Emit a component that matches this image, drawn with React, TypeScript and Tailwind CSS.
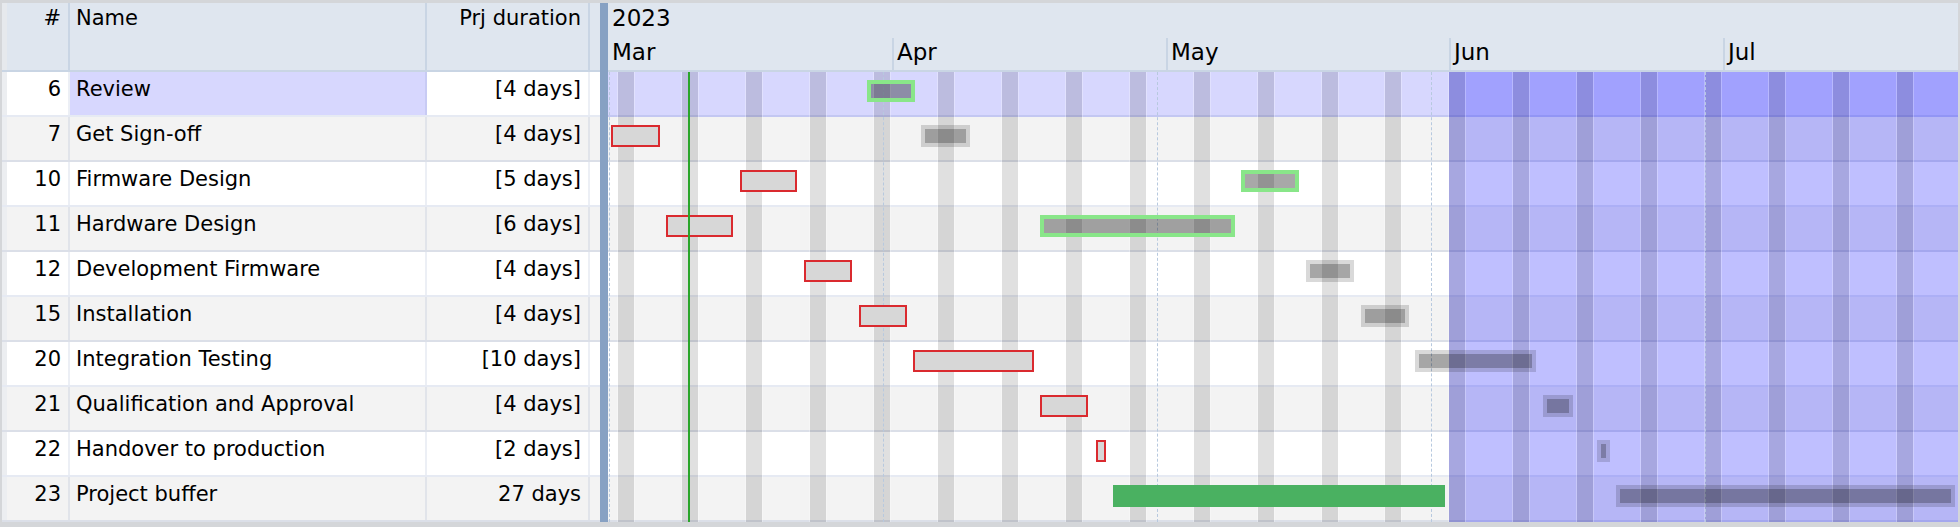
import React from "react";

type Row = {
  id: number;
  name: string;
  dur: string;
  selected?: boolean;
  red?: [number, number];
  solid?: [number, number];
  plan?: [number, number, "green" | "gray"];
};

const rows: Row[] = [
  { id: 6, name: "Review", dur: "[4 days]", selected: true, plan: [259, 48, "green"] },
  { id: 7, name: "Get Sign-off", dur: "[4 days]", red: [3, 49], plan: [313, 49, "gray"] },
  { id: 10, name: "Firmware Design", dur: "[5 days]", red: [131.5, 57.5], plan: [633, 58, "green"] },
  { id: 11, name: "Hardware Design", dur: "[6 days]", red: [58, 66.5], plan: [432, 195, "green"] },
  { id: 12, name: "Development Firmware", dur: "[4 days]", red: [196, 48], plan: [698, 48, "gray"] },
  { id: 15, name: "Installation", dur: "[4 days]", red: [251, 48], plan: [753, 48, "gray"] },
  { id: 20, name: "Integration Testing", dur: "[10 days]", red: [304.5, 121.5], plan: [807, 121, "gray"] },
  { id: 21, name: "Qualification and Approval", dur: "[4 days]", red: [432.3, 48.2], plan: [935, 30, "gray"] },
  { id: 22, name: "Handover to production", dur: "[2 days]", red: [487.6, 10.7], plan: [989, 13, "gray"] },
  { id: 23, name: "Project buffer", dur: "27 days", solid: [505, 332], plan: [1008, 338.6, "gray"] },
];

const stripes = Array.from({ length: 21 }, (_, k) => 9.3 + k * 63.93);
const dashes = [0.5, 274.5, 548.5, 822.5, 1096.5];

function rowBg(i: number, r: Row) {
  if (r.selected) return "bg-white";
  return i % 2 === 1 ? "bg-[#f3f3f3]" : "bg-white";
}

export default function App() {
  return (
    <div className="w-[1960px] h-[527px] bg-[#d4d6d9] pt-[3px] pl-[2px] pr-[2px] pb-[5px] flex font-['DejaVu_Sans',sans-serif] text-black overflow-hidden">
      {/* Left grid */}
      <div className="w-[598px] flex flex-col">
        <div className="h-[69px] flex bg-[#dfe6ef] border-b-2 border-[#c9d5e4] text-[21px] leading-[24px]">
          <div className="w-[5px] bg-[#e6e9ed]" />
          <div className="w-[63px] border-r-2 border-[#c9d5e4] text-right pr-[7px] pt-[3px]">#</div>
          <div className="w-[357px] border-r-2 border-[#c9d5e4] pl-[6px] pt-[3px]">Name</div>
          <div className="w-[163px] border-r-2 border-[#c9d5e4] text-right pr-[7px] pt-[3px]">Prj duration</div>
          <div className="w-[10px]" />
        </div>
        {rows.map((r, i) => (
          <div
            key={r.id}
            className={`h-[45px] flex border-b-2 border-[rgba(64,96,160,0.13)] text-[21px] leading-[24px] ${rowBg(i, r)}`}
          >
            <div className="w-[5px] bg-[#eceef1]" />
            <div className="w-[63px] border-r-2 border-[rgba(64,96,160,0.1)] text-right pr-[7px] pt-[5px]">{r.id}</div>
            <div
              className={`w-[357px] border-r-2 border-[rgba(64,96,160,0.1)] pl-[6px] pt-[5px] whitespace-nowrap ${
                r.selected ? "bg-[#d7d7fe]" : ""
              }`}
            >
              {r.name}
            </div>
            <div className="w-[163px] border-r-2 border-[rgba(64,96,160,0.1)] text-right pr-[7px] pt-[5px] whitespace-nowrap">
              {r.dur}
            </div>
            <div className="w-[10px]" />
          </div>
        ))}
      </div>

      {/* Splitter */}
      <div className="w-[8px] bg-[#87a1c3]" />

      {/* Chart */}
      <div className="w-[1350px] flex flex-col">
        <div className="h-[69px] bg-[#dfe6ef] border-b-2 border-[#c9d5e4] flex flex-col text-[23px] leading-[26px]">
          <div className="h-[35px] pl-[4px] pt-[2px]">2023</div>
          <div className="h-[32px] flex">
            <div className="w-[284px] pl-[4px] pt-[1px]">Mar</div>
            <div className="w-[274px] border-l-2 border-[#c9d5e4] pl-[3px] pt-[1px]">Apr</div>
            <div className="w-[283px] border-l-2 border-[#c9d5e4] pl-[3px] pt-[1px]">May</div>
            <div className="w-[274px] border-l-2 border-[#c9d5e4] pl-[3px] pt-[1px]">Jun</div>
            <div className="flex-1 border-l-2 border-[#c9d5e4] pl-[3px] pt-[1px]">Jul</div>
          </div>
        </div>
        <div className="relative flex-1">
          {rows.map((r, i) => (
            <div
              key={r.id}
              className={`h-[45px] border-b-2 border-[rgba(64,96,160,0.13)] ${
                r.selected ? "bg-[#d7d7fe]" : rowBg(i, r)
              }`}
            />
          ))}
          {/* non-working area */}
          <div className="absolute top-0 bottom-0 left-[840.5px] right-0 bg-[rgba(0,0,255,0.25)]" />
          {/* weekend stripes */}
          {stripes.map((x) => (
            <div
              key={x}
              className="absolute top-0 bottom-0 w-[18px] bg-[rgba(0,0,0,0.12)] border-x border-[rgba(255,255,255,0.25)] bg-clip-padding"
              style={{ left: x }}
            />
          ))}
          {/* month dashed lines */}
          {dashes.map((x) => (
            <div
              key={x}
              className="absolute top-0 bottom-0 border-l border-dashed border-[#b7c9df]"
              style={{ left: x }}
            />
          ))}
          {/* bars */}
          <div className="absolute inset-0 flex flex-col">
            {rows.map((r) => (
              <div key={r.id} className="h-[45px] relative">
                {r.red && (
                  <div
                    className="absolute top-[8px] h-[22px] border-2 border-[#da2a2f] bg-[#d7d7d7]"
                    style={{ left: r.red[0], width: r.red[1] }}
                  />
                )}
                {r.solid && (
                  <div
                    className="absolute top-[8px] h-[22px] bg-[#4ab161]"
                    style={{ left: r.solid[0], width: r.solid[1] }}
                  />
                )}
                {r.plan && r.plan[2] === "green" && (
                  <div
                    className="absolute top-[8px] h-[22px] border-4 border-[#89e689] bg-[rgba(0,0,0,0.34)] bg-clip-padding"
                    style={{ left: r.plan[0], width: r.plan[1] }}
                  />
                )}
                {r.plan && r.plan[2] === "gray" && (
                  <div
                    className="absolute top-[8px] h-[22px] bg-[rgba(0,0,0,0.15)] p-[4px]"
                    style={{ left: r.plan[0], width: r.plan[1] }}
                  >
                    <div className="h-full bg-[rgba(0,0,0,0.23)]" />
                  </div>
                )}
              </div>
            ))}
          </div>
          {/* today line */}
          <div className="absolute top-0 bottom-0 left-[80px] w-[2px] bg-[#2aa52a]" />
        </div>
      </div>
    </div>
  );
}
